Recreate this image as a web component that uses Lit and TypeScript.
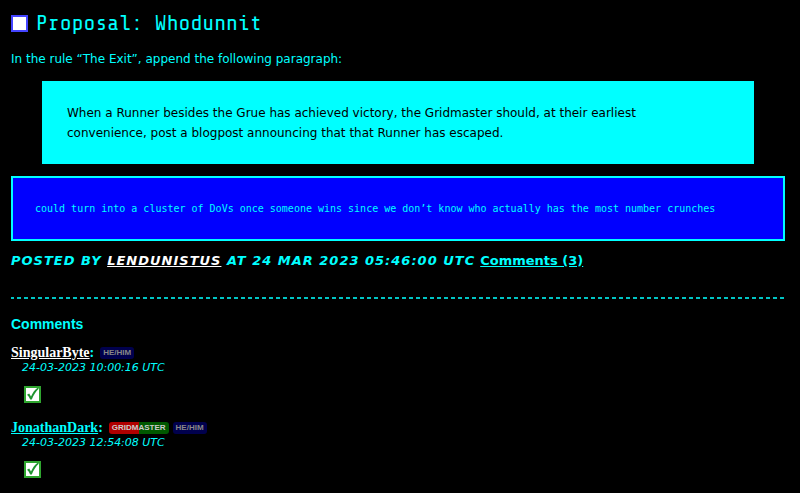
import { LitElement, html, css } from "lit";
import { customElement } from "lit/decorators.js";

interface Comment {
  author: string;
  visited: boolean;
  gridmaster: boolean;
  time: string;
}

const COMMENTS: Comment[] = [
  { author: "SingularByte", visited: false, gridmaster: false, time: "24-03-2023 10:00:16 UTC" },
  { author: "JonathanDark", visited: true, gridmaster: true, time: "24-03-2023 12:54:08 UTC" },
];

@customElement("app-root")
export class AppRoot extends LitElement {
  static styles = css`
    :host {
      display: block;
      box-sizing: border-box;
      min-height: 100vh;
      padding: 11px 15px 15px 11px;
      background: #000;
      color: #0ff;
      font: 12px/20px Verdana, "DejaVu Sans", sans-serif;
    }
    a { color: #0ff; }
    a.author { color: #fff; }
    h1 {
      display: flex;
      align-items: center;
      gap: 8px;
      margin: 0;
      font: 400 22px/24px "Share Tech Mono", "DejaVu Sans Mono", monospace;
    }
    .status {
      box-sizing: border-box;
      width: 17px;
      height: 17px;
      border: 2px solid #44f;
      background: #fff;
    }
    p { margin: 0; }
    .intro { margin-top: 14px; }
    blockquote {
      margin: 12px 31px;
      padding: 22px 90px 21px 25px;
      background: #0ff;
      color: #000;
    }
    .flavour {
      padding: 20px 22px;
      border: 2px solid #0ff;
      background: #00f;
      font: 10px/21px "DejaVu Sans Mono", monospace;
    }
    .posted {
      display: flex;
      flex-wrap: wrap;
      gap: 0 5px;
      margin-top: 10px;
      font-size: 13px;
      font-weight: 700;
    }
    .byline {
      font-style: italic;
      letter-spacing: 1px;
      text-transform: uppercase;
    }
    .rule {
      height: 2px;
      margin: 26px 0 15px;
      border: 0;
      background: linear-gradient(90deg, #00c4c4 4px, #000 4px) -1px 0 / 7px 2px repeat-x;
    }
    h2 {
      margin: 0;
      font: 700 14px/20px Arial, "Liberation Sans", sans-serif;
    }
    .comment { margin-top: 11px; }
    .comment + .comment { margin-top: 17px; }
    .head {
      display: flex;
      align-items: center;
      gap: 6px;
      font: 700 14px/16px "Times New Roman", "Liberation Serif", serif;
    }
    .tags { display: flex; gap: 4px; }
    .tag {
      padding: 0 3px;
      border-radius: 3px;
      background: #00004d;
      color: #888;
      font: 700 8px/12px Arial, "Liberation Sans", sans-serif;
    }
    .tag.gm {
      background: linear-gradient(90deg, #b00000 50%, #005800 50%);
      color: #ccc;
    }
    time {
      display: block;
      margin-left: 11px;
      font-size: 11px;
      line-height: 14px;
      font-style: italic;
    }
    .vote { display: block; width: 17px; height: 17px; margin: 11px 0 0 13px; }
  `;

  private renderComment(c: Comment) {
    return html`
      <article class="comment">
        <div class="head">
          <span><a class=${c.visited ? "" : "author"} href="#${c.author}">${c.author}</a>:</span>
          <span class="tags">
            ${c.gridmaster ? html`<span class="tag gm">GRIDMASTER</span>` : ""}
            <span class="tag">HE/HIM</span>
          </span>
        </div>
        <time>${c.time}</time>
        <svg class="vote" viewBox="0 0 17 17" role="img" aria-label="For">
          <rect width="17" height="17" fill="#2fa52f" />
          <rect x="2" y="2" width="13" height="13" fill="#fff" />
          <path d="M3 8.8L5.2 7.6 7 10.4C8.6 7 10.6 4 13.6 1.8L15 2.6C11.8 5.6 9.6 9.2 7.8 13.600H6.2C5.4 11.6 4.4 10 3 8.8z" fill="#1f9430" />
        </svg>
      </article>
    `;
  }

  render() {
    return html`
      <main>
        <h1><span class="status"></span>Proposal: Whodunnit</h1>
        <p class="intro">In the rule “The Exit”, append the following paragraph:</p>
        <blockquote>
          When a Runner besides the Grue has achieved victory, the Gridmaster should, at their earliest
          convenience, post a blogpost announcing that that Runner has escaped.
        </blockquote>
        <p class="flavour">could turn into a cluster of DoVs once someone wins since we don’t know who actually has the most number crunches</p>
        <div class="posted">
          <span class="byline">Posted by <a class="author" href="#lendunistus">lendunistus</a> at 24 Mar 2023 05:46:00 UTC</span>
          <a href="#comments">Comments (3)</a>
        </div>
        <hr class="rule" />
        <section id="comments">
          <h2>Comments</h2>
          ${COMMENTS.map((c) => this.renderComment(c))}
        </section>
      </main>
    `;
  }
}
